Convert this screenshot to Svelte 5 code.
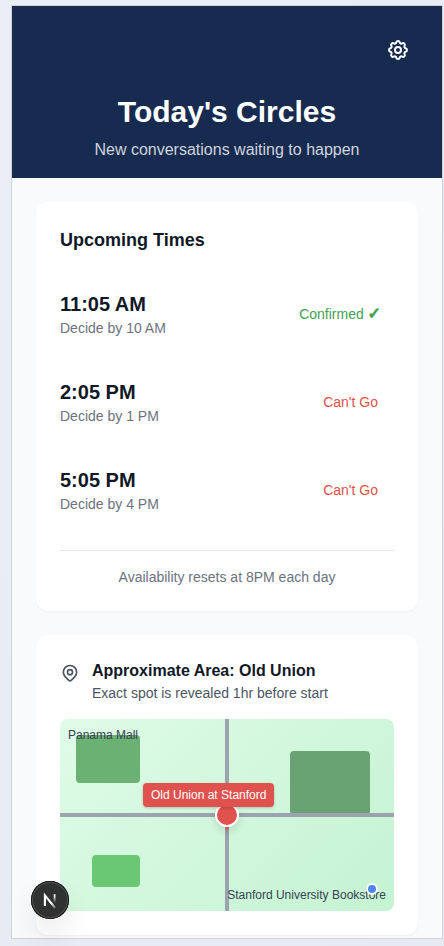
<script>
  const times = [
    { time: '11:05 AM', decide: 'Decide by 10 AM', confirmed: true },
    { time: '2:05 PM', decide: 'Decide by 1 PM', confirmed: false },
    { time: '5:05 PM', decide: 'Decide by 4 PM', confirmed: false }
  ];
</script>

<div class="stage">
  <div class="device">
    <header>
      <button class="settings" aria-label="Settings">
        <svg viewBox="0 0 24 24" width="24" height="24" fill="none" stroke="currentColor" stroke-width="2" stroke-linecap="round" stroke-linejoin="round">
          <path d="M10.325 4.317c.426-1.756 2.924-1.756 3.35 0a1.724 1.724 0 002.573 1.066c1.543-.94 3.31.826 2.37 2.37a1.724 1.724 0 001.065 2.572c1.756.426 1.756 2.924 0 3.35a1.724 1.724 0 00-1.066 2.573c.94 1.543-.826 3.31-2.37 2.37a1.724 1.724 0 00-2.572 1.065c-.426 1.756-2.924 1.756-3.35 0a1.724 1.724 0 00-2.573-1.066c-1.543.94-3.31-.826-2.37-2.37a1.724 1.724 0 00-1.065-2.572c-1.756-.426-1.756-2.924 0-3.35a1.724 1.724 0 001.066-2.573c-.94-1.543.826-3.31 2.37-2.37.996.608 2.296.07 2.572-1.065z" />
          <path d="M15 12a3 3 0 11-6 0 3 3 0 016 0z" />
        </svg>
      </button>
      <h1>Today's Circles</h1>
      <p>New conversations waiting to happen</p>
    </header>

    <main>
      <section class="card">
        <h2>Upcoming Times</h2>
        <ul>
          {#each times as slot}
            <li>
              <div>
                <h3>{slot.time}</h3>
                <p class="decide">{slot.decide}</p>
              </div>
              {#if slot.confirmed}
                <button class="status ok">Confirmed <span class="check">✓</span></button>
              {:else}
                <button class="status no">Can't Go</button>
              {/if}
            </li>
          {/each}
        </ul>
        <p class="reset">Availability resets at 8PM each day</p>
      </section>

      <section class="card">
        <div class="place">
          <svg viewBox="0 0 24 24" width="20" height="20" fill="none" stroke="currentColor" stroke-width="2" stroke-linecap="round" stroke-linejoin="round">
            <path d="M17.657 16.657L13.414 20.9a1.998 1.998 0 01-2.827 0l-4.244-4.243a8 8 0 1111.314 0z" />
            <path d="M15 11a3 3 0 11-6 0 3 3 0 016 0z" />
          </svg>
          <div>
            <h4>Approximate Area: Old Union</h4>
            <p>Exact spot is revealed 1hr before start</p>
          </div>
        </div>
        <div class="map">
          <div class="park one"></div>
          <div class="park two"></div>
          <div class="park three"></div>
          <div class="road across"></div>
          <div class="road down"></div>
          <span class="label mall">Panama Mall</span>
          <span class="label store">Stanford University Bookstore</span>
          <div class="tail"></div>
          <div class="pin"></div>
          <div class="tip">Old Union at Stanford</div>
          <div class="here"></div>
        </div>
      </section>
    </main>
  </div>

  <button class="dev" aria-label="Open Next.js Dev Tools">
    <svg viewBox="0 0 38 38" width="38" height="38" fill="none">
      <defs>
        <linearGradient id="diag" x1="19" y1="19" x2="25" y2="27" gradientUnits="userSpaceOnUse">
          <stop offset="0.3" stop-color="#fff" />
          <stop offset="1" stop-color="#fff" stop-opacity="0.2" />
        </linearGradient>
        <linearGradient id="stem" x1="24" y1="13" x2="24" y2="22" gradientUnits="userSpaceOnUse">
          <stop offset="0.2" stop-color="#fff" />
          <stop offset="1" stop-color="#fff" stop-opacity="0" />
        </linearGradient>
      </defs>
      <path d="M13.9 25V14.4L24.2 27" stroke="url(#diag)" stroke-width="2.1" />
      <path d="M23.6 13.2V22" stroke="url(#stem)" stroke-width="1.8" />
    </svg>
  </button>
</div>

<style>
  :global(body) {
    margin: 0;
  }
  .stage {
    box-sizing: border-box;
    height: 100vh;
    padding: 5px 1px 7px 11px;
    background: linear-gradient(135deg, #e9eef7, #e7eaf3);
    font-family: 'Liberation Sans', Arial, sans-serif;
    color: #111827;
  }
  .device {
    box-sizing: border-box;
    height: 100%;
    overflow: auto;
    scrollbar-width: none;
    border: 1px solid #d0d2d6;
    background: #f9fafb;
  }
  h1, h2, h3, h4, p, ul {
    margin: 0;
    padding: 0;
  }
  button {
    border: 0;
    background: none;
    font-family: inherit;
    cursor: pointer;
  }
  header {
    display: flex;
    flex-direction: column;
    padding: 24px 24px 16px;
    background: #172b50;
    color: #fff;
    text-align: center;
  }
  .settings {
    align-self: flex-end;
    height: 40px;
    padding: 8px;
    color: #fff;
  }
  svg {
    display: block;
  }
  h1 {
    margin: 24px 0 8px;
    font-size: 30px;
    line-height: 36px;
  }
  header p {
    font-size: 16px;
    line-height: 24px;
    color: #cfd4dd;
  }
  main {
    display: flex;
    flex-direction: column;
    gap: 24px;
    padding: 24px 24px 0;
  }
  .card {
    padding: 24px;
    border-radius: 12px;
    background: #fff;
    box-shadow: 0 1px 2px rgba(0, 0, 0, 0.05);
  }
  h2 {
    margin-bottom: 16px;
    font-size: 18px;
    line-height: 28px;
  }
  ul {
    list-style: none;
  }
  li {
    display: flex;
    align-items: center;
    justify-content: space-between;
    padding: 20px 0;
  }
  h3 {
    font-size: 20px;
    line-height: 28px;
  }
  .decide, .reset, .place p {
    font-size: 14px;
    line-height: 20px;
    color: #6b7280;
  }
  .status {
    padding: 8px 16px;
    font-size: 14px;
    line-height: 20px;
  }
  .ok {
    padding-right: 13px;
    color: #43a253;
  }
  .check {
    font-family: 'DejaVu Sans', sans-serif;
    font-size: 16px;
    -webkit-text-stroke: 1px currentColor;
  }
  .no {
    color: #df504b;
  }
  .reset {
    margin-top: 16px;
    padding-top: 16px;
    border-top: 1px solid #e5e7eb;
    text-align: center;
  }
  .place {
    display: flex;
    gap: 12px;
    margin-bottom: 16px;
  }
  .place svg {
    flex: none;
    margin-top: 4px;
    color: #4b5563;
  }
  h4 {
    font-size: 16px;
    line-height: 24px;
  }
  .place p {
    color: #4b5563;
  }
  .map {
    position: relative;
    height: 192px;
    overflow: hidden;
    border-radius: 8px;
    background: linear-gradient(135deg, #dffbe7, #c4f3d2);
  }
  .map > * {
    position: absolute;
  }
  .park {
    border-radius: 4px;
  }
  .one {
    top: 16px;
    left: 16px;
    width: 64px;
    height: 48px;
    background: #6ab173;
  }
  .two {
    top: 32px;
    right: 24px;
    width: 80px;
    height: 64px;
    background: #69a373;
  }
  .three {
    bottom: 24px;
    left: 32px;
    width: 48px;
    height: 32px;
    background: #6ac875;
  }
  .road {
    background: #9ca3af;
  }
  .across {
    top: calc(50% - 2px);
    width: 100%;
    height: 4px;
  }
  .down {
    left: calc(50% - 2px);
    width: 4px;
    height: 100%;
  }
  .label {
    font-size: 12px;
    line-height: 16px;
    color: #374151;
  }
  .mall {
    top: 8px;
    left: 8px;
  }
  .store {
    right: 8px;
    bottom: 8px;
  }
  .pin {
    box-sizing: border-box;
    top: calc(50% - 12px);
    left: calc(50% - 12px);
    width: 24px;
    height: 24px;
    border: 2px solid #fff;
    border-radius: 50%;
    background: #df524d;
    box-shadow: 0 4px 8px rgba(0, 0, 0, 0.12);
  }
  .tail {
    top: calc(50% + 12px);
    left: calc(50% - 2px);
    border: 2px solid transparent;
    border-top: 4px solid #df524d;
    border-bottom: 0;
    z-index: 1;
  }
  .tip {
    bottom: calc(50% + 8px);
    left: calc(50% - 84px);
    padding: 4px 8px;
    border-radius: 4px;
    background: #df524d;
    box-shadow: 0 1px 3px rgba(0, 0, 0, 0.2);
    color: #fff;
    font-size: 12px;
    line-height: 16px;
    white-space: nowrap;
  }
  .here {
    box-sizing: border-box;
    right: 16px;
    bottom: 16px;
    width: 12px;
    height: 12px;
    border: 2px solid #fff;
    border-radius: 50%;
    background: #4f83ee;
  }
  .dev {
    box-sizing: border-box;
    position: fixed;
    bottom: 27px;
    left: 31px;
    width: 38px;
    height: 38px;
    padding: 0;
    border-radius: 50%;
    background: #303131;
    box-shadow: inset 0 0 0 1px #171717, inset 0 0 0 2px #505151, 0 16px 32px -8px rgba(0, 0, 0, 0.24);
  }
</style>
